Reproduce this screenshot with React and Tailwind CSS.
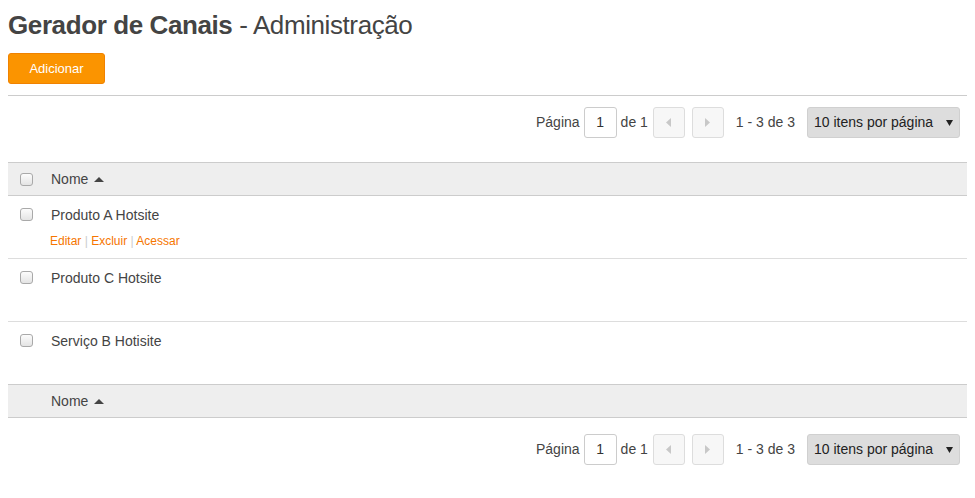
import React from "react";

const font = { fontFamily: '"Liberation Sans", Arial, sans-serif' };

function Checkbox() {
  return (
    <span className="inline-block w-[13px] h-[13px] rounded-[3px] border border-[#a9a9a9] bg-gradient-to-b from-[#fcfcfc] to-[#e4e4e4]" />
  );
}

function Pager() {
  return (
    <div className="flex items-center justify-end h-[31px] text-[14px] text-[#444]">
      <span>Página</span>
      <div className="ml-[4px] w-[33px] h-[31px] border border-[#ccc] rounded-[3px] bg-white flex items-center justify-center text-[#333]">1</div>
      <span className="ml-[4px]">de 1</span>
      <div className="ml-[5px] w-[32px] h-[31px] border border-[#ddd] rounded-[3px] bg-[#f7f7f7] flex items-center justify-center">
        <svg width="5" height="9" viewBox="0 0 5 9"><path d="M5 0 L0 4.5 L5 9 Z" fill="#c8c8c8" /></svg>
      </div>
      <div className="ml-[7px] w-[32px] h-[31px] border border-[#ddd] rounded-[3px] bg-[#f7f7f7] flex items-center justify-center">
        <svg width="5" height="9" viewBox="0 0 5 9"><path d="M0 0 L5 4.5 L0 9 Z" fill="#c8c8c8" /></svg>
      </div>
      <span className="ml-[12px]">1 - 3 de 3</span>
      <div className="ml-[12px] mr-[7px] w-[153px] h-[31px] rounded-[3px] border border-[#d0d0d0] bg-[#ddd] flex items-center justify-between pl-[6px] pr-[6px] text-[#222]">
        <span>10 itens por página</span>
        <svg width="7" height="6" viewBox="0 0 7 6"><path d="M0 0 L7 0 L3.5 6 Z" fill="#222" /></svg>
      </div>
    </div>
  );
}

function HeaderRow({ withCheck }) {
  return (
    <div className="flex items-center h-[34px] bg-[#eee] border-y border-[#ccc] text-[14px] text-[#444]">
      <div className="w-[43px] pl-[12px] flex items-center">{withCheck && <Checkbox />}</div>
      <span>Nome</span>
      <svg className="ml-[6px]" width="10" height="5" viewBox="0 0 10 5"><path d="M0 5 L5 0 L10 5 Z" fill="#444" /></svg>
    </div>
  );
}

function Row({ name, actions, last }) {
  return (
    <div className={`flex ${last ? "h-[62px]" : "h-[63px] border-b border-[#ddd]"}`}>
      <div className="w-[43px] pl-[12px] pt-[8px]"><Checkbox /></div>
      <div className="pt-[11px]">
        <div className="text-[14px] text-[#444] leading-[17px]">{name}</div>
        {actions && (
          <div className="mt-[10px] text-[12px] text-[#f67600] leading-[14px] -ml-[1px]">
            Editar <span className="text-[#ccc]">|</span> Excluir <span className="text-[#ccc]">|</span> Acessar
          </div>
        )}
      </div>
    </div>
  );
}

export default function App() {
  return (
    <div className="bg-white w-[975px] h-[498px] px-[8px]" style={font}>
      <h1 className="pt-[9px] text-[26px] leading-[33px] text-[#444] tracking-[-0.4px]">
        <span className="font-bold">Gerador de Canais</span> - Administração
      </h1>
      <button className="mt-[11px] w-[97px] h-[31px] rounded-[3px] bg-[#fb9400] border border-[#f08200] text-white text-[13px]">
        Adicionar
      </button>
      <div className="mt-[11px] w-[959px] border-t border-[#ccc]" />
      <div className="mt-[11px]"><Pager /></div>
      <div className="mt-[24px]">
        <HeaderRow withCheck />
        <Row name="Produto A Hotsite" actions />
        <Row name="Produto C Hotsite" />
        <Row name="Serviço B Hotisite" last />
        <HeaderRow />
      </div>
      <div className="mt-[16px]"><Pager /></div>
    </div>
  );
}
